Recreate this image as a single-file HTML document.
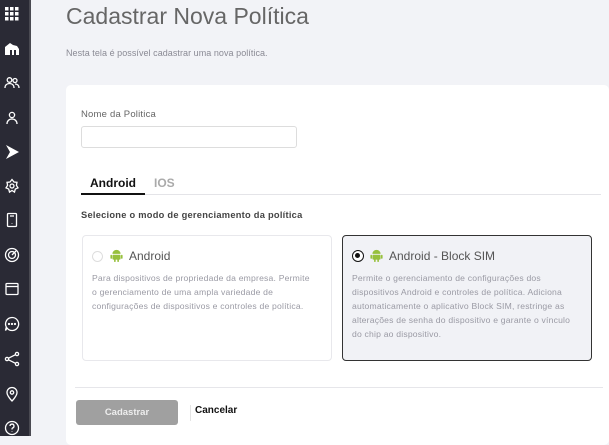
<!DOCTYPE html>
<html><head><meta charset="utf-8"><style>
*{margin:0;padding:0;box-sizing:border-box}
body{width:609px;height:436px;overflow:hidden;background:#f2f3f7;font-family:"Liberation Sans",sans-serif;position:relative}
.sb{position:absolute;left:0;top:0;width:31px;height:436px;background:#2a2a35;border-right:2px solid #4a4a52}
.ic{position:absolute;left:4px;width:16px;height:16px}
.t{position:absolute;white-space:nowrap}
.card{position:absolute;left:66px;top:85px;width:543px;height:360px;background:#fff;border-radius:5px}
.opt{position:absolute;width:250px;height:126px;border:1px solid #e8e8ec;border-radius:4px;background:#fff}
.opt p{position:absolute;left:9px;top:35px;white-space:nowrap;font-size:8.6px;letter-spacing:.2px;line-height:14px;color:#9a9aa4}
.opt .h{position:absolute;left:46px;top:13px;font-size:12px;color:#555}
</style></head><body>
<div class="sb">
<svg class="ic" style="top:6px" viewBox="0 0 16 16" fill="#fff"><rect x="1" y="1" width="3.5" height="3.5"/><rect x="6" y="1" width="3.5" height="3.5"/><rect x="11" y="1" width="3.5" height="3.5"/><rect x="1" y="6" width="3.5" height="3.5"/><rect x="6" y="6" width="3.5" height="3.5"/><rect x="11" y="6" width="3.5" height="3.5"/><rect x="1" y="11" width="3.5" height="3.5"/><rect x="6" y="11" width="3.5" height="3.5"/><rect x="11" y="11" width="3.5" height="3.5"/></svg>
<svg class="ic" style="top:40px" viewBox="0 0 16 16" fill="#fff"><path d="M1 15V7l5-4 3 2 4 1 2 3v6h-3v-5h-2v5H8v-5H6v5z"/></svg>
<svg class="ic" style="top:75px" viewBox="0 0 16 16" fill="none" stroke="#fff" stroke-width="1.3"><circle cx="5.5" cy="5" r="2.3"/><path d="M1 13c0-3 2-4.5 4.5-4.5S10 10 10 13"/><circle cx="11" cy="5.5" r="2"/><path d="M11 9c2 0 4 1 4 4"/></svg>
<svg class="ic" style="top:110px" viewBox="0 0 16 16" fill="none" stroke="#fff" stroke-width="1.3"><circle cx="8" cy="5" r="2.6"/><path d="M3 14c0-3 2-5 5-5s5 2 5 5"/></svg>
<svg class="ic" style="top:144px" viewBox="0 0 16 16" fill="#fff"><path d="M2 1l13 7-13 7 4-7z"/></svg>
<svg class="ic" style="top:178px" viewBox="0 0 16 16" fill="none" stroke="#fff" stroke-width="1.3"><path d="M8 1.5l2 2.5 3 .3-.6 3 1.6 2.5-2.7 1.3-.8 3-2.5-1.6-2.5 1.6-.8-3L2 9.8l1.6-2.5-.6-3 3-.3z"/><circle cx="8" cy="8" r="2"/></svg>
<svg class="ic" style="top:212px" viewBox="0 0 16 16" fill="none" stroke="#fff" stroke-width="1.3"><rect x="3.5" y="1.5" width="9" height="13" rx="1"/><path d="M6 4h4M8 11v.5"/></svg>
<svg class="ic" style="top:247px" viewBox="0 0 16 16" fill="none" stroke="#fff" stroke-width="1.3"><circle cx="8" cy="8" r="6.5"/><circle cx="8" cy="8" r="3.5"/><path d="M8 8l4-4"/></svg>
<svg class="ic" style="top:281px" viewBox="0 0 16 16" fill="none" stroke="#fff" stroke-width="1.3"><rect x="2" y="2.5" width="12" height="11" rx="1"/><path d="M2 5.5h12"/></svg>
<svg class="ic" style="top:316px" viewBox="0 0 16 16" fill="none" stroke="#fff" stroke-width="1.3"><path d="M8 1.5a6.5 6.5 0 1 1-5 10.5L1.5 14.5l.8-3.5A6.5 6.5 0 0 1 8 1.5z"/><circle cx="5" cy="8" r=".5"/><circle cx="8" cy="8" r=".5"/><circle cx="11" cy="8" r=".5"/></svg>
<svg class="ic" style="top:351px" viewBox="0 0 16 16" fill="none" stroke="#fff" stroke-width="1.3"><circle cx="3" cy="8" r="1.6"/><circle cx="13" cy="3" r="1.6"/><circle cx="13" cy="13" r="1.6"/><path d="M4.5 7.2l7-3.5M4.5 8.8l7 3.5"/></svg>
<svg class="ic" style="top:386px" viewBox="0 0 16 16" fill="none" stroke="#fff" stroke-width="1.3"><path d="M8 15s-5-5-5-8.5a5 5 0 0 1 10 0C13 10 8 15 8 15z"/><circle cx="8" cy="6.5" r="1.7"/></svg>
<svg class="ic" style="top:420px" viewBox="0 0 16 16" fill="none" stroke="#fff" stroke-width="1.3"><circle cx="8" cy="8" r="6.5"/><path d="M6 6a2 2 0 1 1 2.5 2c-.5.2-.5.7-.5 1.5M8 11.5v.5"/></svg>
</div>
<div class="t" style="left:66px;top:3px;font-size:23px;color:#666;font-weight:300">Cadastrar Nova Política</div>
<div class="t" style="left:66px;top:48px;font-size:9px;letter-spacing:.05px;color:#8a8a94">Nesta tela é possível cadastrar uma nova política.</div>
<div class="card">
<div class="t" style="left:15px;top:24px;font-size:9.5px;letter-spacing:.2px;color:#666">Nome da Politica</div>
<div style="position:absolute;left:15px;top:41px;width:216px;height:22px;border:1px solid #ddd;border-radius:3px"></div>
<div class="t" style="left:24px;top:91px;font-size:12px;font-weight:bold;color:#111">Android</div>
<div class="t" style="left:88px;top:91px;font-size:12px;font-weight:bold;color:#aaa">IOS</div>
<div style="position:absolute;left:15px;top:109px;width:520px;height:1px;background:#e4e4e8"></div>
<div style="position:absolute;left:15px;top:108px;width:64px;height:2px;background:#111"></div>
<div class="t" style="left:15px;top:125px;font-size:9.3px;letter-spacing:.25px;font-weight:bold;color:#444">Selecione o modo de gerenciamento da política</div>
<div class="opt" style="left:16px;top:150px">
<div style="position:absolute;left:9px;top:15px;width:11px;height:11px;border:1px solid #ddd;border-radius:50%"></div>
<svg style="position:absolute;left:27px;top:13px" width="13" height="13" viewBox="0 0 16 16" fill="#97c03d"><path d="M3 6a5 5 0 0 1 10 0z"/><rect x="3" y="7" width="10" height="6" rx="1"/><rect x="0.5" y="7" width="2" height="5" rx="1"/><rect x="13.5" y="7" width="2" height="5" rx="1"/><rect x="5" y="12" width="2" height="4" rx="1"/><rect x="9" y="12" width="2" height="4" rx="1"/></svg>
<div class="h">Android</div>
<p>Para dispositivos de propriedade da empresa. Permite<br>o gerenciamento de uma ampla variedade de<br>configurações de dispositivos e controles de política.</p>
</div>
<div class="opt" style="left:276px;top:150px;background:#f1f2f6;border:1px solid #333">
<div style="position:absolute;left:9px;top:14px;width:12px;height:12px;border:1.5px solid #111;border-radius:50%;background:#fff"><div style="position:absolute;left:2px;top:2px;width:5px;height:5px;border-radius:50%;background:#111"></div></div>
<svg style="position:absolute;left:27px;top:13px" width="13" height="13" viewBox="0 0 16 16" fill="#97c03d"><path d="M3 6a5 5 0 0 1 10 0z"/><rect x="3" y="7" width="10" height="6" rx="1"/><rect x="0.5" y="7" width="2" height="5" rx="1"/><rect x="13.5" y="7" width="2" height="5" rx="1"/><rect x="5" y="12" width="2" height="4" rx="1"/><rect x="9" y="12" width="2" height="4" rx="1"/></svg>
<div class="h">Android - Block SIM</div>
<p>Permite o gerenciamento de configurações dos<br>dispositivos Android e controles de política. Adiciona<br>automaticamente o aplicativo Block SIM, restringe as<br>alterações de senha do dispositivo e garante o vínculo<br>do chip ao dispositivo.</p>
</div>
<div style="position:absolute;left:9px;top:302px;width:528px;height:1px;background:#e6e6ea"></div>
<div style="position:absolute;left:10px;top:315px;width:102px;height:25px;background:#a0a0a0;border-radius:3px;color:#eee;font-size:9.5px;font-weight:bold;text-align:center;line-height:25px">Cadastrar</div>
<div style="position:absolute;left:124px;top:320px;width:1px;height:16px;background:#e4e4e4"></div>
<div class="t" style="left:129px;top:320px;font-size:10px;font-weight:bold;color:#111">Cancelar</div>
</div>
</body></html>
